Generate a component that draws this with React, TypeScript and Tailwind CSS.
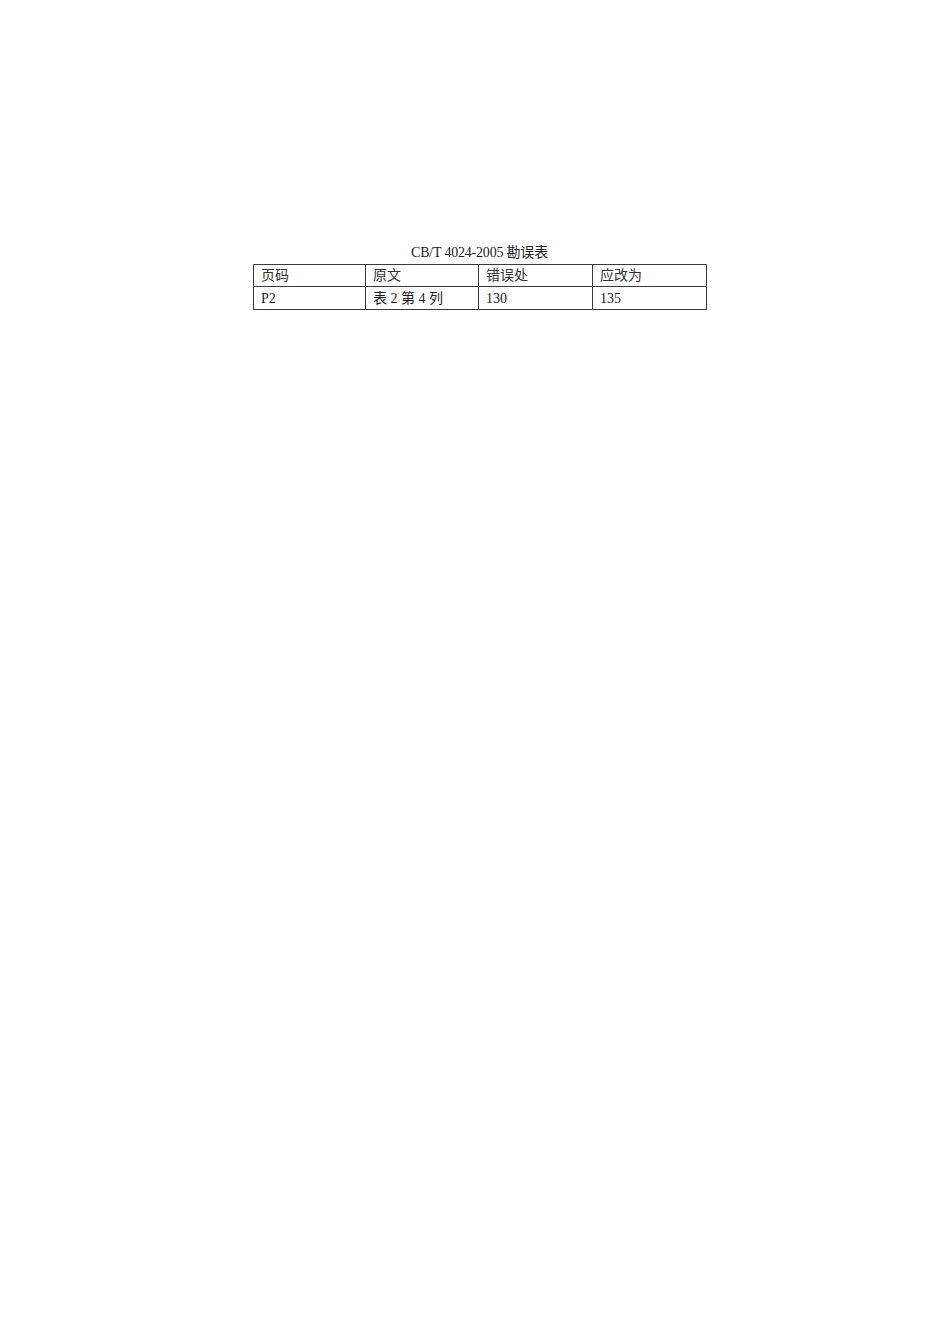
const font = "font-['Liberation_Serif','Noto_Sans_CJK_SC',serif]";

const header = ["页码", "原文", "错误处", "应改为"];
const row = ["P2", "表 2 第 4 列", "130", "135"];

export default function App() {
  return (
    <div className={`min-h-[1343px] w-[950px] bg-white text-[#1c1c1c] ${font}`}>
      <div className="pt-[244px] pl-[253px]">
        <div className="w-[453px] text-center text-[14px] leading-[18px] tracking-[-0.2px]">
          CB/T 4024-2005 勘误表
        </div>
        <table className="mt-[2px] w-[453px] table-fixed border-collapse text-[14px]">
          <colgroup>
            <col className="w-[112px]" />
            <col className="w-[113px]" />
            <col className="w-[114px]" />
            <col className="w-[114px]" />
          </colgroup>
          <tbody>
            <tr className="h-[22px]">
              {header.map((h) => (
                <td key={h} className="border border-[#3a3a3a] px-[7px] py-0 leading-[20px] text-[#333]">
                  {h}
                </td>
              ))}
            </tr>
            <tr className="h-[23px]">
              {row.map((c) => (
                <td key={c} className="border border-[#3a3a3a] px-[7px] py-0 leading-[21px]">
                  {c}
                </td>
              ))}
            </tr>
          </tbody>
        </table>
      </div>
    </div>
  );
}
